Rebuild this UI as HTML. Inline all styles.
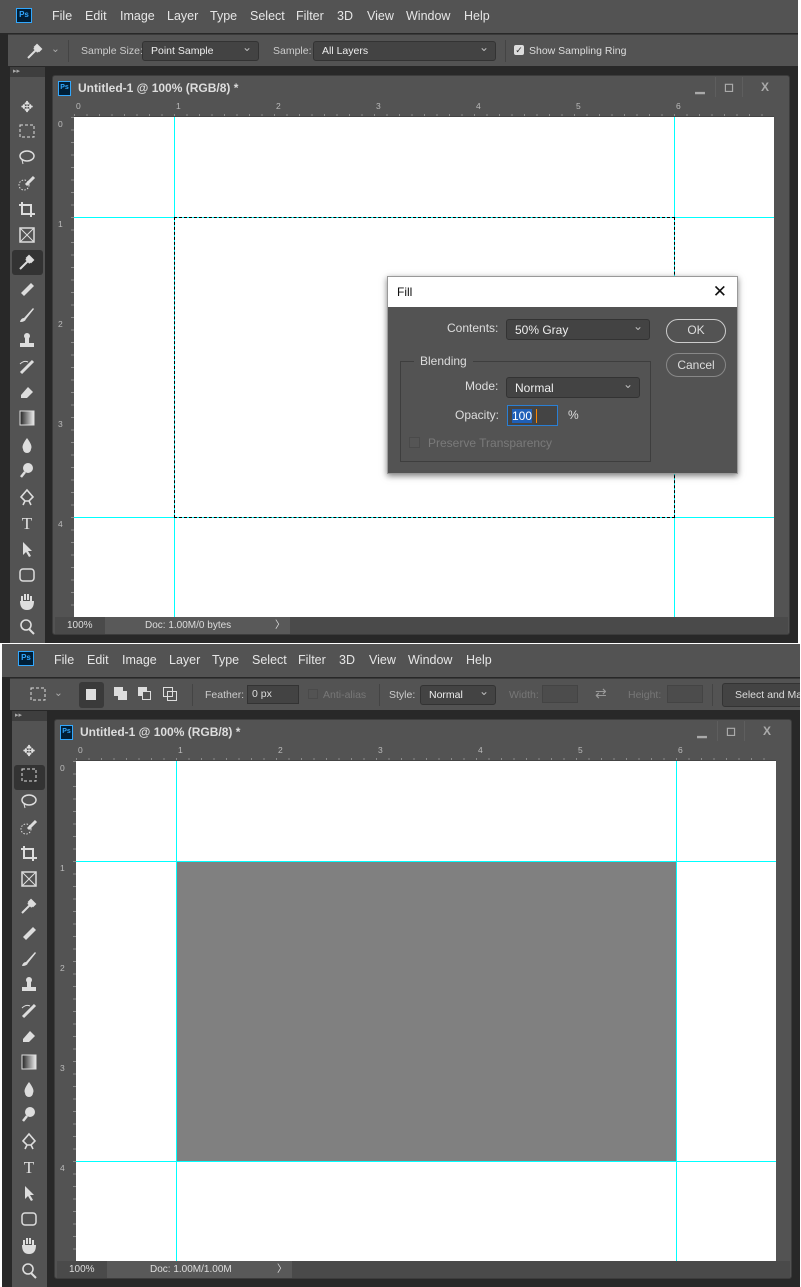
<!DOCTYPE html>
<html><head><meta charset="utf-8">
<style>
*{margin:0;padding:0;box-sizing:border-box}
body{width:801px;height:1287px;background:#fff;position:relative;overflow:hidden;font-family:"Liberation Sans",sans-serif;font-size:12px;color:#ddd}
.p{position:absolute;left:0;width:798px;height:643px;background:#282828;overflow:hidden}
.a{position:absolute}
.menu{left:0;top:0;width:798px;height:33px;background:#535353}
.menu span{position:absolute;top:9px;font-size:12.5px;color:#e6e6e6}
.ps{position:absolute;width:16px;height:15px;border:1.5px solid #31a8ff;background:#001e36;color:#31a8ff;font-size:8px;font-weight:bold;text-align:center;line-height:12px}
.opt{left:8px;top:34px;width:790px;height:32px;background:#535353;border-top:1px solid #3a3a3a}
.sel{position:absolute;background:#434343;border:1px solid #333;border-radius:3px;color:#eee;font-size:10.5px;padding-left:8px;line-height:18px}
.sel:after{content:"⌄";position:absolute;right:6px;top:-4px;color:#bbb;font-size:12px}
.lbl{position:absolute;font-size:10.5px;color:#ccc}
.tools{left:10px;top:67px;width:35px;height:580px;background:#535353}
.tools .hd{position:absolute;left:0;top:0;width:35px;height:10px;background:#3e3e3e;color:#aaa;font-size:7px;padding-left:3px;line-height:10px}
.ti{position:absolute;left:6px;width:22px;height:20px;color:#e0e0e0;text-align:center;font-size:15px;line-height:20px}
.doc{left:52px;top:75px;width:738px;height:560px;background:#535353;border:1px solid #3c3c3c;border-radius:3px}
.title{position:absolute;left:25px;top:5px;font-size:12px;font-weight:bold;color:#ddd}
.wb{position:absolute;top:1px;height:20px;border-left:1px solid #5e5e5e;color:#aaa;font-weight:bold;text-align:center;font-size:12px;line-height:20px}
.rt{position:absolute;left:21px;top:24px;width:700px;height:17px;background:#535353;
background-image:repeating-linear-gradient(90deg,#8a8a8a 0 1px,transparent 1px 12.5px);background-size:100% 3px;background-repeat:no-repeat;background-position:0 14px;border-bottom:1px solid #444}
.rl{position:absolute;left:2px;top:41px;width:19px;height:500px;background:#535353;
background-image:repeating-linear-gradient(180deg,#8a8a8a 0 1px,transparent 1px 12.5px);background-size:3px 100%;background-repeat:no-repeat;background-position:16px 0}
.rn{position:absolute;font-size:8.5px;color:#bbb}
.canvas{position:absolute;left:21px;top:41px;width:700px;height:500px;background:#fff;overflow:hidden}
.gv{position:absolute;top:0;width:1px;height:500px;background:#00ffff}
.gh{position:absolute;left:0;width:700px;height:1px;background:#00ffff}
.status{position:absolute;left:2px;top:541px;width:733px;height:17px;background:#4a4a4a;font-size:10px;color:#ddd;line-height:17px}
</style></head><body>

<!-- PANEL 1 -->
<div class="p" style="top:0">
 <div class="a menu">
  <div class="ps" style="left:16px;top:8px">Ps</div>
  <span style="left:52px">File</span><span style="left:85px">Edit</span><span style="left:120px">Image</span><span style="left:167px">Layer</span><span style="left:210px">Type</span><span style="left:250px">Select</span><span style="left:296px">Filter</span><span style="left:337px">3D</span><span style="left:367px">View</span><span style="left:406px">Window</span><span style="left:464px">Help</span>
 </div>
 <div class="a opt">
  <svg class="a" style="left:18px;top:7px" width="18" height="18"><path d="M2 16 L10 8 M8 6 L12 10 M11 3 L15 7 L13 9 L9 5Z" stroke="#ddd" stroke-width="2" fill="#ddd"/></svg>
  <span class="lbl" style="left:43px;top:8px;color:#aaa">⌄</span>
  <div class="a" style="left:60px;top:5px;width:1px;height:22px;background:#444"></div>
  <span class="lbl" style="left:73px;top:10px">Sample Size:</span>
  <div class="sel" style="left:134px;top:6px;width:117px;height:20px">Point Sample</div>
  <span class="lbl" style="left:265px;top:10px">Sample:</span>
  <div class="sel" style="left:305px;top:6px;width:183px;height:20px">All Layers</div>
  <div class="a" style="left:497px;top:5px;width:1px;height:22px;background:#444"></div>
  <div class="a" style="left:506px;top:10px;width:10px;height:10px;background:#ddd;border-radius:2px;color:#333;font-size:9px;line-height:10px;text-align:center">✓</div>
  <span class="lbl" style="left:521px;top:10px;color:#ddd">Show Sampling Ring</span>
 </div>
 <div class="a tools">
  <div class="hd">▸▸</div>
  <div class="ti" style="top:31px">✥</div>
  <div class="ti" style="top:57px"><svg width="16" height="14"><rect x="1" y="1" width="14" height="12" fill="none" stroke="#ddd" stroke-dasharray="3 2"/></svg></div>
  <div class="ti" style="top:82px"><svg width="18" height="16"><ellipse cx="9" cy="7" rx="7" ry="5" fill="none" stroke="#ddd" stroke-width="1.5"/><path d="M4 11 L5 15" stroke="#ddd"/></svg></div>
  <div class="ti" style="top:108px"><svg width="18" height="16"><circle cx="6" cy="10" r="5" fill="none" stroke="#ddd" stroke-dasharray="1.5 1.5"/><path d="M8 10 L16 2" stroke="#ddd" stroke-width="3"/></svg></div>
  <div class="ti" style="top:134px"><svg width="18" height="18"><path d="M4 1 V13 H17 M1 4 H13 V16" fill="none" stroke="#ddd" stroke-width="2"/></svg></div>
  <div class="ti" style="top:160px"><svg width="16" height="16"><rect x="1" y="1" width="14" height="14" fill="none" stroke="#ddd" stroke-width="1.5"/><path d="M1 1 L15 15 M15 1 L1 15" stroke="#ddd"/></svg></div>
  <div class="a" style="left:2px;top:183px;width:31px;height:25px;background:#333;border-radius:3px"></div>
  <div class="ti" style="top:186px"><svg width="18" height="18"><path d="M2 16 L10 8 M8 6 L12 10 M11 3 L15 7 L13 9 L9 5Z" stroke="#ddd" stroke-width="2" fill="#ddd"/></svg></div>
  <div class="ti" style="top:213px"><svg width="18" height="18"><path d="M3 13 L13 3 L16 6 L6 16Z" fill="#ddd"/></svg></div>
  <div class="ti" style="top:239px"><svg width="18" height="18"><path d="M2 16 Q3 12 6 12 L15 2 L16 3 L8 13 Q7 16 2 16Z" fill="#ddd"/></svg></div>
  <div class="ti" style="top:265px"><svg width="18" height="18"><circle cx="9" cy="4" r="3" fill="#ddd"/><rect x="7" y="6" width="4" height="5" fill="#ddd"/><rect x="2" y="11" width="14" height="4" fill="#ddd"/></svg></div>
  <div class="ti" style="top:291px"><svg width="18" height="18"><path d="M3 15 L15 3" stroke="#ddd" stroke-width="3"/><path d="M2 6 Q6 2 10 4" stroke="#ddd" fill="none"/></svg></div>
  <div class="ti" style="top:316px"><svg width="18" height="18"><path d="M3 12 L10 4 L15 9 L9 15 H3Z" fill="#ddd"/></svg></div>
  <div class="ti" style="top:342px"><svg width="18" height="18"><defs><linearGradient id="g1"><stop offset="0" stop-color="#222"/><stop offset="1" stop-color="#eee"/></linearGradient></defs><rect x="2" y="2" width="14" height="14" fill="url(#g1)" stroke="#ddd"/></svg></div>
  <div class="ti" style="top:369px"><svg width="18" height="18"><path d="M9 2 Q15 10 13 13 A4 4 0 0 1 5 13 Q3 10 9 2Z" fill="#ddd"/></svg></div>
  <div class="ti" style="top:394px"><svg width="18" height="18"><circle cx="10" cy="7" r="5" fill="#ddd"/><path d="M7 11 L3 16" stroke="#ddd" stroke-width="2.5"/></svg></div>
  <div class="ti" style="top:421px"><svg width="18" height="18"><path d="M9 2 L15 9 L11 13 H7 L3 9Z M7 13 L5 17 M11 13 L13 17" fill="none" stroke="#ddd" stroke-width="1.6"/></svg></div>
  <div class="ti" style="top:447px;font-size:17px;font-family:'Liberation Serif',serif">T</div>
  <div class="ti" style="top:473px"><svg width="18" height="18"><path d="M5 2 L5 15 L8 12 L11 17 L13 16 L10 11 L14 11Z" fill="#ddd"/></svg></div>
  <div class="ti" style="top:499px"><svg width="18" height="18"><rect x="2" y="3" width="14" height="12" rx="3" fill="none" stroke="#ddd" stroke-width="1.5"/></svg></div>
  <div class="ti" style="top:525px"><svg width="18" height="18"><path d="M4 9 V4 M7 8 V2 M10 8 V2 M13 9 V4 M3 9 Q3 17 9 17 Q15 17 15 9" stroke="#ddd" stroke-width="2" fill="#ddd"/></svg></div>
  <div class="ti" style="top:551px"><svg width="18" height="18"><circle cx="8" cy="7" r="5" fill="none" stroke="#ddd" stroke-width="1.6"/><path d="M11 11 L16 16" stroke="#ddd" stroke-width="2"/></svg></div>
 </div>
 <div class="a doc">
  <div class="ps" style="left:5px;top:5px;width:13px;height:15px;font-size:7px">Ps</div>
  <div class="title">Untitled-1 @ 100% (RGB/8) *</div>
  <div class="wb" style="left:632px;width:30px;border-left:none">▁</div>
  <div class="wb" style="left:662px;width:27px">◻</div>
  <div class="wb" style="left:689px;width:45px">X</div>
  <div class="rt"></div><div class="rl"></div>
  <span class="rn" style="left:23px;top:25px">0</span><span class="rn" style="left:123px;top:25px">1</span><span class="rn" style="left:223px;top:25px">2</span><span class="rn" style="left:323px;top:25px">3</span><span class="rn" style="left:423px;top:25px">4</span><span class="rn" style="left:523px;top:25px">5</span><span class="rn" style="left:623px;top:25px">6</span>
  <span class="rn" style="left:5px;top:43px">0</span><span class="rn" style="left:5px;top:143px">1</span><span class="rn" style="left:5px;top:243px">2</span><span class="rn" style="left:5px;top:343px">3</span><span class="rn" style="left:5px;top:443px">4</span>
  <div class="canvas">
   <div class="gv" style="left:100px"></div><div class="gv" style="left:600px"></div>
   <div class="gh" style="top:100px"></div><div class="gh" style="top:400px"></div>
   <div class="a" style="left:100px;top:100px;width:501px;height:301px;border:1px dashed #000"></div>
  </div>
  <div class="status"><span style="position:absolute;left:12px">100%</span><div class="a" style="left:50px;top:0;width:185px;height:17px;background:#595959"><span style="position:absolute;left:40px">Doc: 1.00M/0 bytes</span><span style="position:absolute;left:170px">〉</span></div></div>
 </div>
 <!-- Fill dialog -->
 <div class="a" style="left:387px;top:276px;width:351px;height:198px;background:#535353;border:1px solid #999;box-shadow:0 2px 6px rgba(0,0,0,.5)">
  <div class="a" style="left:0;top:0;width:349px;height:30px;background:#fff;color:#111;font-size:12px;line-height:30px;padding-left:9px">Fill<span style="position:absolute;right:10px;top:0;font-size:17px">✕</span></div>
  <span class="a" style="left:59px;top:44px;font-size:12px;color:#ddd">Contents:</span>
  <div class="sel" style="left:118px;top:42px;width:144px;height:21px;font-size:12px;line-height:20px">50% Gray</div>
  <div class="a" style="left:278px;top:42px;width:60px;height:24px;border:1.5px solid #ccc;border-radius:12px;text-align:center;line-height:21px;font-size:12px">OK</div>
  <div class="a" style="left:278px;top:76px;width:60px;height:24px;border:1px solid #888;border-radius:12px;text-align:center;line-height:22px;font-size:12px">Cancel</div>
  <div class="a" style="left:12px;top:84px;width:251px;height:101px;border:1px solid #3e3e3e"></div>
  <span class="a" style="left:26px;top:77px;padding:0 6px;background:#535353;font-size:12px">Blending</span>
  <span class="a" style="left:77px;top:102px;font-size:12px">Mode:</span>
  <div class="sel" style="left:118px;top:100px;width:134px;height:21px;font-size:12px;line-height:20px">Normal</div>
  <span class="a" style="left:67px;top:131px;font-size:12px">Opacity:</span>
  <div class="a" style="left:119px;top:128px;width:51px;height:21px;border:1px solid #2a7fd4;background:#444"><span style="position:absolute;left:4px;top:3px;background:#1e5fb8;color:#fff;font-size:12px;line-height:14px">100</span><span style="position:absolute;left:28px;top:3px;width:1px;height:14px;background:#f80"></span></div>
  <span class="a" style="left:180px;top:131px;font-size:12px">%</span>
  <div class="a" style="left:21px;top:160px;width:11px;height:11px;border:1px solid #4a4a4a;background:#555"></div>
  <span class="a" style="left:40px;top:159px;font-size:12px;color:#7a7a7a">Preserve Transparency</span>
 </div>
</div>

<!-- PANEL 2 -->
<div class="p" style="top:644px;left:2px;height:643px">
 <div class="a menu">
  <div class="ps" style="left:16px;top:7px">Ps</div>
  <span style="left:52px">File</span><span style="left:85px">Edit</span><span style="left:120px">Image</span><span style="left:167px">Layer</span><span style="left:210px">Type</span><span style="left:250px">Select</span><span style="left:296px">Filter</span><span style="left:337px">3D</span><span style="left:367px">View</span><span style="left:406px">Window</span><span style="left:464px">Help</span>
 </div>
 <div class="a opt">
  <svg class="a" style="left:20px;top:8px" width="16" height="14"><rect x="1" y="1" width="14" height="12" fill="none" stroke="#ddd" stroke-dasharray="3 2"/></svg>
  <span class="lbl" style="left:44px;top:8px;color:#aaa">⌄</span>
  <div class="a" style="left:69px;top:3px;width:25px;height:26px;background:#3a3a3a;border-radius:3px"></div>
  <div class="a" style="left:76px;top:10px;width:10px;height:11px;background:#ddd"></div>
  <div class="a" style="left:104px;top:8px;width:9px;height:9px;background:#ddd"></div><div class="a" style="left:108px;top:12px;width:9px;height:9px;background:#ddd"></div>
  <div class="a" style="left:128px;top:8px;width:9px;height:9px;background:#ddd"></div><div class="a" style="left:132px;top:12px;width:9px;height:9px;border:1.5px solid #ddd;background:#535353"></div>
  <div class="a" style="left:153px;top:8px;width:10px;height:10px;border:1.5px solid #ddd"></div><div class="a" style="left:157px;top:12px;width:10px;height:10px;border:1.5px solid #ddd"></div>
  <div class="a" style="left:182px;top:5px;width:1px;height:22px;background:#444"></div>
  <span class="lbl" style="left:195px;top:10px">Feather:</span>
  <div class="a" style="left:237px;top:6px;width:52px;height:19px;background:#434343;border:1px solid #333;font-size:10.5px;padding-left:4px;line-height:17px">0 px</div>
  <div class="a" style="left:298px;top:10px;width:10px;height:10px;border:1px solid #4a4a4a"></div>
  <span class="lbl" style="left:313px;top:10px;color:#777">Anti-alias</span>
  <div class="a" style="left:369px;top:5px;width:1px;height:22px;background:#444"></div>
  <span class="lbl" style="left:379px;top:10px">Style:</span>
  <div class="sel" style="left:410px;top:6px;width:76px;height:20px">Normal</div>
  <span class="lbl" style="left:499px;top:10px;color:#777">Width:</span>
  <div class="a" style="left:532px;top:6px;width:36px;height:18px;background:#4c4c4c;border:1px solid #444"></div>
  <span class="lbl" style="left:585px;top:6px;color:#999;font-size:14px">⇄</span>
  <span class="lbl" style="left:618px;top:10px;color:#777">Height:</span>
  <div class="a" style="left:657px;top:6px;width:36px;height:18px;background:#4c4c4c;border:1px solid #444"></div>
  <div class="a" style="left:702px;top:5px;width:1px;height:22px;background:#444"></div>
  <div class="a" style="left:712px;top:4px;width:90px;height:24px;background:#434343;border:1px solid #333;border-radius:3px;font-size:10.5px;line-height:22px;padding-left:12px;white-space:nowrap;overflow:hidden">Select and Mask...</div>
 </div>
 <div class="a tools">
  <div class="hd">▸▸</div>
  <div class="ti" style="top:31px">✥</div>
  <div class="a" style="left:2px;top:54px;width:31px;height:25px;background:#333;border-radius:3px"></div>
  <div class="ti" style="top:57px"><svg width="16" height="14"><rect x="1" y="1" width="14" height="12" fill="none" stroke="#ddd" stroke-dasharray="3 2"/></svg></div>
  <div class="ti" style="top:82px"><svg width="18" height="16"><ellipse cx="9" cy="7" rx="7" ry="5" fill="none" stroke="#ddd" stroke-width="1.5"/><path d="M4 11 L5 15" stroke="#ddd"/></svg></div>
  <div class="ti" style="top:108px"><svg width="18" height="16"><circle cx="6" cy="10" r="5" fill="none" stroke="#ddd" stroke-dasharray="1.5 1.5"/><path d="M8 10 L16 2" stroke="#ddd" stroke-width="3"/></svg></div>
  <div class="ti" style="top:134px"><svg width="18" height="18"><path d="M4 1 V13 H17 M1 4 H13 V16" fill="none" stroke="#ddd" stroke-width="2"/></svg></div>
  <div class="ti" style="top:160px"><svg width="16" height="16"><rect x="1" y="1" width="14" height="14" fill="none" stroke="#ddd" stroke-width="1.5"/><path d="M1 1 L15 15 M15 1 L1 15" stroke="#ddd"/></svg></div>
  <div class="ti" style="top:186px"><svg width="18" height="18"><path d="M2 16 L10 8 M8 6 L12 10 M11 3 L15 7 L13 9 L9 5Z" stroke="#ddd" stroke-width="2" fill="#ddd"/></svg></div>
  <div class="ti" style="top:213px"><svg width="18" height="18"><path d="M3 13 L13 3 L16 6 L6 16Z" fill="#ddd"/></svg></div>
  <div class="ti" style="top:239px"><svg width="18" height="18"><path d="M2 16 Q3 12 6 12 L15 2 L16 3 L8 13 Q7 16 2 16Z" fill="#ddd"/></svg></div>
  <div class="ti" style="top:265px"><svg width="18" height="18"><circle cx="9" cy="4" r="3" fill="#ddd"/><rect x="7" y="6" width="4" height="5" fill="#ddd"/><rect x="2" y="11" width="14" height="4" fill="#ddd"/></svg></div>
  <div class="ti" style="top:291px"><svg width="18" height="18"><path d="M3 15 L15 3" stroke="#ddd" stroke-width="3"/><path d="M2 6 Q6 2 10 4" stroke="#ddd" fill="none"/></svg></div>
  <div class="ti" style="top:316px"><svg width="18" height="18"><path d="M3 12 L10 4 L15 9 L9 15 H3Z" fill="#ddd"/></svg></div>
  <div class="ti" style="top:342px"><svg width="18" height="18"><defs><linearGradient id="g2"><stop offset="0" stop-color="#222"/><stop offset="1" stop-color="#eee"/></linearGradient></defs><rect x="2" y="2" width="14" height="14" fill="url(#g2)" stroke="#ddd"/></svg></div>
  <div class="ti" style="top:369px"><svg width="18" height="18"><path d="M9 2 Q15 10 13 13 A4 4 0 0 1 5 13 Q3 10 9 2Z" fill="#ddd"/></svg></div>
  <div class="ti" style="top:394px"><svg width="18" height="18"><circle cx="10" cy="7" r="5" fill="#ddd"/><path d="M7 11 L3 16" stroke="#ddd" stroke-width="2.5"/></svg></div>
  <div class="ti" style="top:421px"><svg width="18" height="18"><path d="M9 2 L15 9 L11 13 H7 L3 9Z M7 13 L5 17 M11 13 L13 17" fill="none" stroke="#ddd" stroke-width="1.6"/></svg></div>
  <div class="ti" style="top:447px;font-size:17px;font-family:'Liberation Serif',serif">T</div>
  <div class="ti" style="top:473px"><svg width="18" height="18"><path d="M5 2 L5 15 L8 12 L11 17 L13 16 L10 11 L14 11Z" fill="#ddd"/></svg></div>
  <div class="ti" style="top:499px"><svg width="18" height="18"><rect x="2" y="3" width="14" height="12" rx="3" fill="none" stroke="#ddd" stroke-width="1.5"/></svg></div>
  <div class="ti" style="top:525px"><svg width="18" height="18"><path d="M4 9 V4 M7 8 V2 M10 8 V2 M13 9 V4 M3 9 Q3 17 9 17 Q15 17 15 9" stroke="#ddd" stroke-width="2" fill="#ddd"/></svg></div>
  <div class="ti" style="top:551px"><svg width="18" height="18"><circle cx="8" cy="7" r="5" fill="none" stroke="#ddd" stroke-width="1.6"/><path d="M11 11 L16 16" stroke="#ddd" stroke-width="2"/></svg></div>
 </div>
 <div class="a doc">
  <div class="ps" style="left:5px;top:5px;width:13px;height:15px;font-size:7px">Ps</div>
  <div class="title">Untitled-1 @ 100% (RGB/8) *</div>
  <div class="wb" style="left:632px;width:30px;border-left:none">▁</div>
  <div class="wb" style="left:662px;width:27px">◻</div>
  <div class="wb" style="left:689px;width:45px">X</div>
  <div class="rt"></div><div class="rl"></div>
  <span class="rn" style="left:23px;top:25px">0</span><span class="rn" style="left:123px;top:25px">1</span><span class="rn" style="left:223px;top:25px">2</span><span class="rn" style="left:323px;top:25px">3</span><span class="rn" style="left:423px;top:25px">4</span><span class="rn" style="left:523px;top:25px">5</span><span class="rn" style="left:623px;top:25px">6</span>
  <span class="rn" style="left:5px;top:43px">0</span><span class="rn" style="left:5px;top:143px">1</span><span class="rn" style="left:5px;top:243px">2</span><span class="rn" style="left:5px;top:343px">3</span><span class="rn" style="left:5px;top:443px">4</span>
  <div class="canvas">
   <div class="a" style="left:100px;top:100px;width:501px;height:301px;background:#808080;border:1px dashed #000"></div>
   <div class="gv" style="left:100px"></div><div class="gv" style="left:600px"></div>
   <div class="gh" style="top:100px"></div><div class="gh" style="top:400px"></div>
  </div>
  <div class="status"><span style="position:absolute;left:12px">100%</span><div class="a" style="left:50px;top:0;width:185px;height:17px;background:#595959"><span style="position:absolute;left:43px">Doc: 1.00M/1.00M</span><span style="position:absolute;left:170px">〉</span></div></div>
 </div>
</div>
</body></html>
